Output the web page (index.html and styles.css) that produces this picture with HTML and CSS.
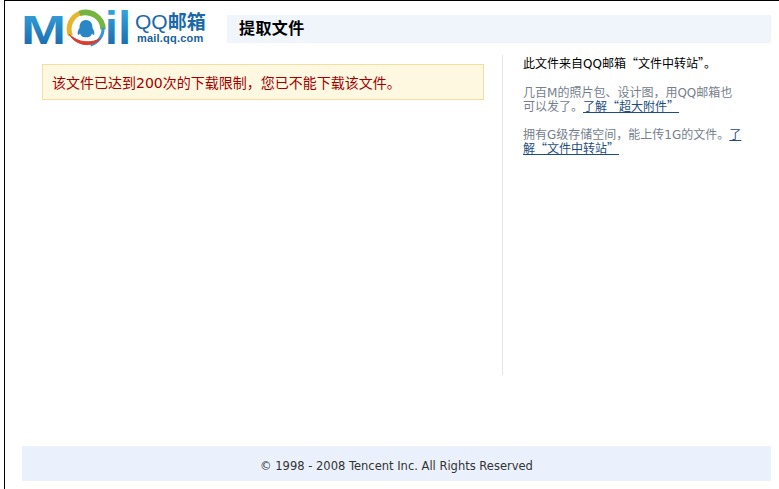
FILE: index.html
```html
<!DOCTYPE html>
<html lang="zh-CN">
<head>
<meta charset="utf-8">
<title>提取文件</title>
<link rel="stylesheet" href="styles.css">
</head>
<body>
<div class="frame">
  <header class="header">
    <div class="logo">
      <svg class="logo-mark" width="113" height="54" viewBox="22 1 113 54" xmlns="http://www.w3.org/2000/svg" aria-label="Mail">
        <defs>
          <linearGradient id="blue" gradientUnits="userSpaceOnUse" x1="0" y1="10" x2="0" y2="44">
            <stop offset="0" stop-color="#35a3dc"/>
            <stop offset="1" stop-color="#1b6fb0"/>
          </linearGradient>
        </defs>
        <text class="mark-m" x="21" y="44" textLength="45" lengthAdjust="spacingAndGlyphs" fill="url(#blue)">M</text>
        <text class="mark-il" x="105" y="44" textLength="26" lengthAdjust="spacing" fill="url(#blue)">il</text>
        <g transform="translate(.5 -.5)">
          <path d="M70 36A17.500 17 0 0 1 80 13.500" fill="none" stroke="#e6b62e" stroke-width="5"/>
          <path d="M79 14A17.500 17 0 0 1 102.500 30" fill="none" stroke="#74b53f" stroke-width="5.500"/>
          <path d="M102.500 28A17.500 17 0 0 1 90 45.500" fill="none" stroke="#3a97d2" stroke-width="3"/>
          <path d="M69 35C75 46 91 49 100 39C91 44 78 44 69 35Z" fill="#d93d2d" stroke="#d93d2d"/>
          <path d="M85.500 20.500C80.500 20.500 79 24.500 79 28.500C77.500 30.500 76.500 33.500 77.500 35.500C78.500 35.500 79 34.500 79.500 34C80 35.500 81 36.500 81.500 37C82.500 38 88.500 38 89.500 37C90 36.500 91 35.500 91.500 34C92 34.500 92.500 35.500 93.500 35.500C94.500 33.500 93.500 30.500 92 28.500C92 24.500 90.500 20.500 85.500 20.500Z" fill="#2b86c5"/>
        </g>
      </svg>
      <div class="logo-text">
        <div class="logo-name"><span class="logo-qq">QQ</span>邮箱</div>
        <div class="logo-url">mail.qq.com</div>
      </div>
    </div>
    <h1 class="title">提取文件</h1>
  </header>
  <div class="content">
    <main class="main">
      <div class="alert">该文件已达到<span class="lat">200</span>次的下载限制，您已不能下载该文件。</div>
    </main>
    <aside class="side">
      <p class="side-lead">此文件来自<span class="lat">QQ</span>邮箱“文件中转站”。</p>
      <p class="side-note">几百<span class="lat">M</span>的照片包、设计图，用<span class="lat">QQ</span>邮箱也可以发了。<a href="#">了解“超大附件”</a></p>
      <p class="side-note">拥有<span class="lat">G</span>级存储空间，能上传<span class="lat">1G</span>的文件。<a href="#">了解“文件中转站”</a></p>
    </aside>
  </div>
  <footer class="footer">© 1998 - 2008 Tencent Inc. All Rights Reserved</footer>
</div>
</body>
</html>
```
FILE: styles.css
```css
* { box-sizing: border-box; }
html, body { margin: 0; padding: 0; background: #fff; }
body {
  width: 779px;
  height: 489px;
  overflow: hidden;
  font-family: "Noto Sans CJK SC", "Liberation Sans", sans-serif;
  font-size: 12px;
}
.lat { font-family: "DejaVu Sans", sans-serif; line-height: 0; }
.frame {
  margin-left: 4px;
  height: 489px;
  border-left: 1px solid #000;
  border-top: 1px solid #000;
  display: flex;
  flex-direction: column;
}
.header {
  display: flex;
  align-items: flex-start;
  height: 54px;
  padding: 0 8px 0 17px;
}
.logo { display: flex; width: 205px; flex: none; }
.logo-mark { flex: none; display: block; }
.mark-m { font: bold 40px "Liberation Sans", sans-serif; }
.mark-il { font: bold 46px "Liberation Sans", sans-serif; }
.logo-text { color: #1a69a8; margin-top: 9px; width: 80px; }
.logo-name {
  font: bold 19px/22px "Noto Sans CJK SC", sans-serif;
  white-space: nowrap;
}
.logo-qq { font: 21px/22px "Liberation Sans", sans-serif; }
.logo-url {
  font: bold 11px/11px "Liberation Sans", sans-serif;
  margin-left: 2px;
  letter-spacing: .2px;
  color: #175f9b;
}
.title {
  flex: 1;
  height: 28px;
  margin: 14px 0 0;
  padding-left: 12px;
  background: #f0f4fb;
  color: #000;
  font: bold 16px/25px "Noto Sans CJK SC", sans-serif;
  letter-spacing: .4px;
}
.content { display: flex; height: 320px; }
.main { width: 497px; flex: none; padding: 9px 18px 0 37px; }
.alert {
  height: 36px;
  padding-left: 9px;
  border: 1px solid #f0dfa0;
  background: #fff8e0;
  color: #a00000;
  font-size: 14px;
  line-height: 35px;
  white-space: nowrap;
}
.side {
  width: 245px;
  flex: none;
  border-left: 1px solid #e4e4e4;
  padding: 0 0 0 20px;
}
.side p { margin: 0 0 13px; width: 220px; line-height: 14.500px; }
.side .side-lead { padding-top: 1px; margin-bottom: 14px; color: #000; }
.side-note { color: #76808c; }
.side a { color: #1d4e7d; text-decoration: underline; }
.footer {
  height: 35px;
  margin: 71px 8px 0 17px;
  background: #eaf1fc;
  color: #333;
  text-align: center;
  font: 11.500px/40px "DejaVu Sans", sans-serif;
}
```
